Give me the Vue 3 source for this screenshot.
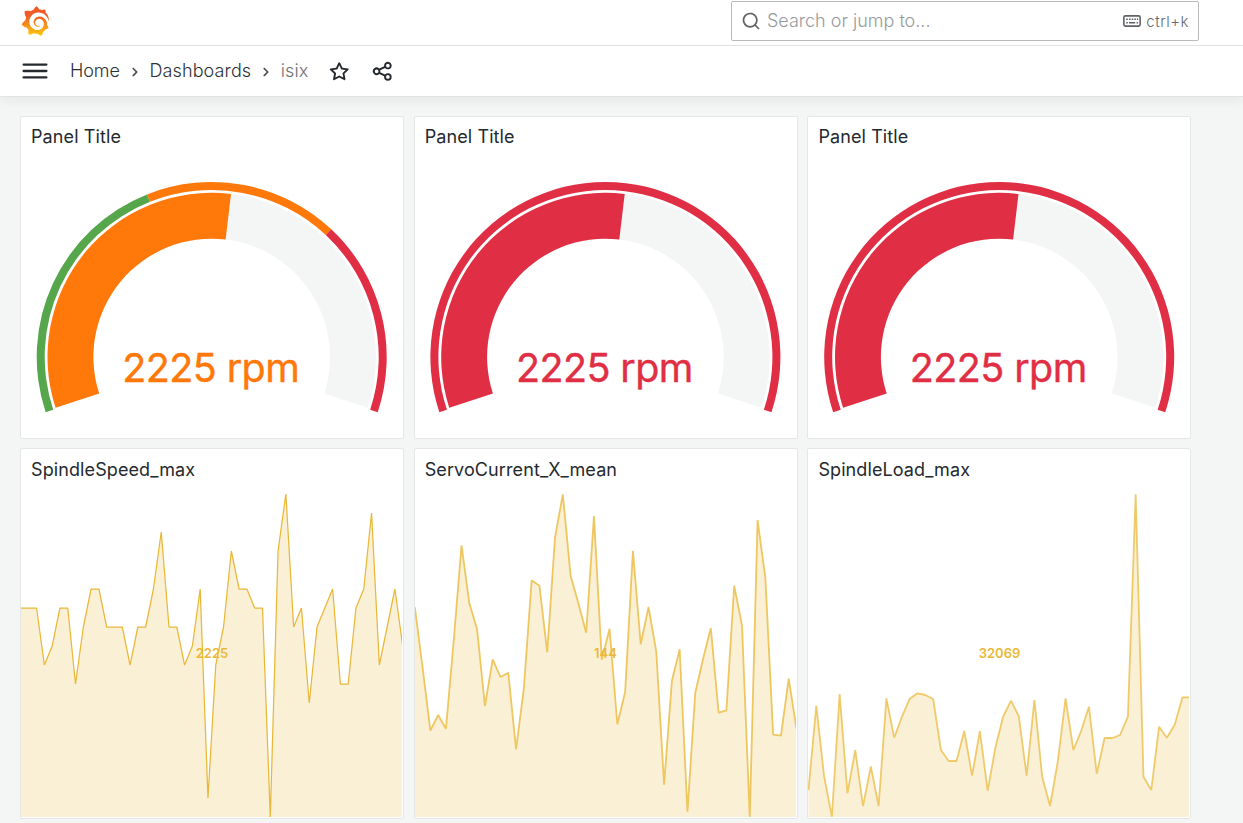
<script setup>
const step = 7.79

const polar = (cx, r, deg) => {
  const a = (deg * Math.PI) / 180
  return `${(cx + r * Math.sin(a)).toFixed(2)} ${(357 - r * Math.cos(a)).toFixed(2)}`
}

const arc = (cx, outer, inner, from, to) => {
  const large = to - from > 180 ? 1 : 0
  return `M${polar(cx, outer, from)}A${outer} ${outer} 0 ${large} 1 ${polar(cx, outer, to)}L${polar(cx, inner, to)}A${inner} ${inner} 0 ${large} 0 ${polar(cx, inner, from)}Z`
}

const red = '#e02f44'
const orange = '#ff780a'
const green = '#56a64b'

const gauges = [
  { left: 20, cx: 211.7, color: orange, bands: [[-108.4, -21.7, green], [-21.7, 43.1, orange], [43.1, 108.4, red]] },
  { left: 414, cx: 605.4, color: red, bands: [[-108.4, 108.4, red]] },
  { left: 807, cx: 999.2, color: red, bands: [[-108.4, 108.4, red]] }
]

const charts = [
  {
    title: 'SpindleSpeed_max', value: '2225', left: 20, x0: 21, right: 402, stroke: 1.25, opacity: 1, cx: 212,
    ys: [608, 608, 608, 665, 646, 608, 608, 684, 627, 589, 589, 627, 627, 627, 665, 627, 627, 589, 532, 627, 627, 665, 646, 589, 798, 665, 627, 551, 589, 589, 608, 608, 817, 551, 494, 627, 608, 703, 627, 608, 589, 684, 684, 608, 589, 513, 665, 627, 589, 646]
  },
  {
    title: 'ServoCurrent_X_mean', value: '144', left: 414, x0: 414.8, right: 796, stroke: 1.8, opacity: 0.78, cx: 605.5,
    ys: [607, 667.5, 730.7, 715, 728.7, 640, 545.3, 603.3, 629.3, 706, 659.3, 677, 672.7, 749.3, 688.3, 580.3, 585.7, 652.3, 537.3, 494.3, 575.7, 603.3, 632.7, 516, 659.7, 628.7, 724.3, 692, 550.7, 644.3, 607, 651.7, 784.7, 681, 649.3, 811.7, 693, 659, 628, 712.7, 710.3, 585.7, 625.3, 816.7, 520, 577.7, 734.7, 735.7, 678.7, 728.7]
  },
  {
    title: 'SpindleLoad_max', value: '32069', left: 807, x0: 808.5, right: 1189, stroke: 1.8, opacity: 0.72, cx: 999.5,
    ys: [790, 705.7, 776, 816.7, 694, 793.3, 750, 806, 766.3, 806, 698.3, 737.7, 716.7, 698.7, 693.3, 695, 699, 750, 761, 761, 731, 775.7, 731, 790.7, 747.3, 716.3, 700.7, 716.3, 775.7, 700, 776.7, 806, 761.7, 698.3, 750, 731, 706.7, 773.7, 738, 738, 735, 716.7, 494.3, 776.7, 790, 726.7, 737.7, 725, 697.3, 697.3]
  }
]

const line = (c) => c.ys.map((y, i) => `${(c.x0 + i * step).toFixed(2)},${y}`).join(' ')
const area = (c) => `${c.x0},817 ${line(c)} ${(c.x0 + (c.ys.length - 1) * step).toFixed(2)},817`
</script>

<template>
  <div class="page">
    <header class="topbar">
      <svg class="logo" viewBox="0 0 351 365">
        <defs>
          <linearGradient id="sun" gradientUnits="userSpaceOnUse" x1="175" y1="446" x2="175" y2="114">
            <stop offset="0" stop-color="#fff100" />
            <stop offset="1" stop-color="#f05a28" />
          </linearGradient>
        </defs>
        <path fill="url(#sun)" d="M342,161.2c-0.6-6.1-1.6-13.1-3.6-20.9c-2-7.7-5-16.2-9.4-25c-4.4-8.8-10.1-17.9-17.5-26.8c-2.9-3.5-6.1-6.9-9.5-10.2c5.1-20.3-6.2-37.9-6.2-37.9c-19.5-1.2-31.9,6.1-36.5,9.4c-0.8-0.3-1.5-0.7-2.3-1c-3.3-1.3-6.7-2.6-10.3-3.7c-3.5-1.1-7.1-2.1-10.8-3c-3.7-0.9-7.4-1.6-11.2-2.2c-0.7-0.1-1.3-0.2-2-0.3c-8.5-27.2-32.9-38.6-32.9-38.6c-27.3,17.3-32.4,41.5-32.4,41.5s-0.1,0.5-0.3,1.4c-1.5,0.4-3,0.9-4.5,1.3c-2.1,0.6-4.2,1.4-6.2,2.2c-2.1,0.8-4.1,1.6-6.2,2.5c-4.1,1.8-8.2,3.8-12.2,6c-3.9,2.2-7.7,4.6-11.4,7.1c-0.5-0.2-1-0.4-1-0.4c-37.8-14.4-71.3,2.9-71.3,2.9c-3.1,40.2,15.1,65.5,18.7,70.1c-0.9,2.5-1.7,5-2.5,7.5c-2.8,9.1-4.9,18.4-6.2,28.1c-0.2,1.4-0.4,2.8-0.5,4.2C18.8,192.7,8.5,228,8.5,228c29.1,33.5,63.1,35.6,63.1,35.6c0,0,0.1-0.1,0.1-0.1c4.3,7.7,9.3,15,14.9,21.9c2.4,2.9,4.8,5.6,7.4,8.3c-10.6,30.4,1.5,55.6,1.5,55.6c32.4,1.2,53.7-14.2,58.2-17.7c3.2,1.1,6.5,2.1,9.8,2.9c10,2.6,20.2,4.1,30.4,4.5c2.5,0.1,5.1,0.2,7.6,0.1l1.2,0l0.8,0l1.6,0l1.6-0.1l0,0.1c15.3,21.8,42.1,24.9,42.1,24.9c19.1-20.1,20.2-40.1,20.2-44.4l0,0c0,0,0-0.1,0-0.3c0-0.4,0-0.6,0-0.6l0,0c0-0.3,0-0.6,0-0.9c4-2.8,7.8-5.8,11.4-9.1c7.6-6.9,14.3-14.8,19.9-23.3c0.5-0.8,1-1.6,1.5-2.4c21.6,1.2,36.9-13.4,36.9-13.4c-3.6-22.5-16.4-33.5-19.1-35.6l0,0c0,0-0.1-0.1-0.3-0.2c-0.2-0.1-0.2-0.2-0.2-0.2c-0.1-0.1-0.3-0.2-0.5-0.3c0.1-1.4,0.2-2.7,0.3-4.1c0.2-2.4,0.2-4.9,0.2-7.3l0-1.8l0-0.9l0-0.5c0-0.6,0-0.4,0-0.6l-0.1-1.5l-0.1-2c0-0.7-0.1-1.3-0.2-1.9c-0.1-0.6-0.1-1.3-0.2-1.9l-0.2-1.9l-0.3-1.9c-0.4-2.5-0.8-4.9-1.4-7.4c-2.3-9.7-6.1-18.9-11-27.2c-5-8.3-11.2-15.6-18.3-21.8c-7-6.2-14.9-11.2-23.1-14.9c-8.3-3.7-16.9-6.1-25.5-7.2c-4.3-0.6-8.6-0.8-12.9-0.7l-1.6,0l-0.4,0c-0.1,0-0.6,0-0.5,0l-0.7,0l-1.6,0.1c-0.6,0-1.2,0.1-1.7,0.1c-2.2,0.2-4.4,0.5-6.5,0.9c-8.6,1.6-16.7,4.7-23.8,9c-7.1,4.3-13.3,9.6-18.3,15.6c-5,6-8.9,12.7-11.6,19.6c-2.7,6.9-4.2,14.1-4.6,21c-0.1,1.7-0.1,3.5-0.1,5.2c0,0.4,0,0.9,0,1.3l0.1,1.4c0.1,0.8,0.1,1.7,0.2,2.5c0.3,3.5,1,6.9,1.9,10.1c1.9,6.5,4.9,12.4,8.6,17.4c3.7,5,8.2,9.1,12.9,12.4c4.7,3.2,9.8,5.5,14.8,7c5,1.5,10,2.1,14.7,2.1c0.6,0,1.2,0,1.7,0c0.3,0,0.6,0,0.9,0c0.3,0,0.6,0,0.9-0.1c0.5,0,1-0.1,1.5-0.1c0.1,0,0.3,0,0.4-0.1l0.5-0.1c0.3,0,0.6-0.1,0.9-0.1c0.6-0.1,1.1-0.2,1.7-0.3c0.6-0.1,1.1-0.2,1.6-0.4c1.1-0.2,2.1-0.6,3.1-0.9c2-0.7,4-1.5,5.7-2.4c1.8-0.9,3.4-2,5-3c0.4-0.3,0.9-0.6,1.3-1c1.6-1.3,1.9-3.7,0.6-5.3c-1.1-1.4-3.1-1.8-4.7-0.9c-0.4,0.2-0.8,0.4-1.2,0.6c-1.4,0.7-2.8,1.3-4.3,1.8c-1.5,0.5-3.1,0.9-4.7,1.2c-0.8,0.1-1.6,0.2-2.5,0.3c-0.4,0-0.8,0.1-1.3,0.1c-0.4,0-0.9,0-1.2,0c-0.4,0-0.8,0-1.2,0c-0.5,0-1,0-1.5-0.1l-0.3,0l-0.3,0c-0.2,0-0.5,0-0.7-0.1c-0.5-0.1-0.9-0.1-1.4-0.2c-3.7-0.5-7.4-1.6-10.9-3.2c-3.6-1.6-7-3.8-10.1-6.6c-3.1-2.8-5.8-6.1-7.9-9.9c-2.1-3.8-3.6-8-4.3-12.4c-0.3-2.2-0.5-4.5-0.4-6.7c0-0.6,0.1-1.2,0.1-1.8l0-0.3l0-0.5c0-0.3,0.1-0.6,0.1-0.9c0.1-1.2,0.3-2.4,0.5-3.6c1.7-9.6,6.5-19,13.9-26.1c1.9-1.8,3.9-3.4,6-4.9c2.1-1.5,4.4-2.8,6.8-3.9c2.4-1.1,4.8-2,7.4-2.7c2.5-0.7,5.1-1.1,7.8-1.4c1.3-0.1,2.6-0.2,4-0.2c0.4,0,0.6,0,0.9,0l1.1,0l0.7,0l0.4,0l1.1,0.1c2.9,0.2,5.7,0.6,8.5,1.3c5.6,1.2,11.1,3.3,16.2,6.1c10.2,5.7,18.9,14.5,24.2,25.1c2.7,5.3,4.6,11,5.5,16.9c0.2,1.5,0.4,3,0.5,4.5l0.1,1.1l0.1,1.1c0,0.4,0,0.8,0,1.1c0,0.4,0,0.8,0,1.1l0,1l0,1.1c0,0.7-0.1,1.9-0.1,2.6c-0.1,1.6-0.3,3.3-0.5,4.9c-0.2,1.6-0.5,3.2-0.8,4.8c-0.3,1.6-0.7,3.2-1.1,4.7c-0.8,3.1-1.8,6.2-3,9.3c-2.4,6-5.6,11.8-9.4,17.1c-7.7,10.6-18.2,19.2-30.2,24.7c-6,2.7-12.3,4.7-18.8,5.7c-3.2,0.6-6.5,0.9-9.8,1l-0.6,0l-0.5,0l-1.1,0l-1.6,0l-1.2,0c-1.8,0-3.5-0.1-5.3-0.3c-7-0.5-13.9-1.8-20.7-3.7c-6.7-1.9-13.2-4.6-19.4-7.8c-12.3-6.6-23.4-15.6-32-26.5c-4.3-5.4-8.1-11.3-11.2-17.4c-3.1-6.1-5.6-12.6-7.4-19.1c-1.8-6.6-2.9-13.3-3.4-20.1l-0.1-1.3l0-7.2c0.1-3.3,0.4-6.8,0.8-10.2c0.4-3.4,1-6.9,1.7-10.3c0.7-3.4,1.5-6.8,2.5-10.2c1.9-6.7,4.3-13.2,7.1-19.3c5.7-12.2,13.1-23.1,22-31.8c2.2-2.2,4.5-4.2,6.9-6.2c2.4-1.9,4.9-3.7,7.5-5.4c2.5-1.7,5.2-3.2,7.9-4.6c1.3-0.7,2.7-1.4,4.1-2c1.4-0.6,2.8-1.2,4.2-1.8c2.8-1.2,5.7-2.2,8.7-3.1c1.5-0.4,2.9-0.9,4.4-1.3c1.5-0.4,3-0.8,4.5-1.1c1.5-0.4,3-0.7,4.6-1c1.5-0.3,3-0.5,4.6-0.8c3.8-0.6,7-0.9,10.4-1.2l7.4-0.4c2.9-0.1,5.9-0.1,8.8,0c5.8,0.2,11.5,0.9,17,1.9c11.1,2.1,21.5,5.6,31,10.3c9.5,4.6,17.9,10.3,25.3,16.5c0.9,0.8,1.8,1.6,2.7,2.4c0.9,0.8,1.7,1.6,2.6,2.4c0.9,0.8,1.7,1.6,2.5,2.4c0.8,0.8,1.6,1.6,2.4,2.5c3.1,3.3,6,6.6,8.6,10c5.2,6.7,9.4,13.5,12.7,19.9c0.4,0.8,0.8,1.6,1.2,2.4c0.4,0.8,0.8,1.6,1.1,2.4c0.4,0.8,0.7,1.5,1.1,2.3c0.3,0.8,0.7,1.5,1,2.3c1.2,3,2.4,5.9,3.3,8.6c1.5,4.4,2.6,8.3,3.5,11.7c0.3,1.4,1.6,2.3,3,2.1c1.5-0.1,2.6-1.3,2.6-2.8C342.6,170.4,342.5,166.1,342,161.2z" />
      </svg>
      <div class="search">
        <svg class="search-icon" viewBox="0 0 24 24"><path d="M21.71,20.29,18,16.61A9,9,0,1,0,16.61,18l3.68,3.68a1,1,0,0,0,1.42,0A1,1,0,0,0,21.71,20.29ZM11,18a7,7,0,1,1,7-7A7,7,0,0,1,11,18Z" /></svg>
        <span class="placeholder">Search or jump to...</span>
        <svg class="keyboard" viewBox="0 0 18 12">
          <rect x=".85" y=".85" width="16.3" height="10.3" rx="1.6" />
          <path d="M3.2 4.3h1.6M6 4.3h1.6M8.7 4.3h1.6M11.3 4.3h1.6M13.9 4.3h1.2M3.2 7.7h1.6M6 7.7h6.2M13.6 7.7h1.5" />
        </svg>
        <span class="shortcut">ctrl+k</span>
      </div>
    </header>

    <nav class="crumbs">
      <svg class="menu" viewBox="0 0 26 18"><path d="M1.6 2.6h22.8M1.6 9h22.8M1.6 15.4h22.8" /></svg>
      <span class="crumb home">Home</span>
      <svg class="chevron" viewBox="0 0 24 24"><path d="M14.83,11.29,10.59,7.05a1,1,0,0,0-1.42,0,1,1,0,0,0,0,1.41L12.71,12,9.17,15.54a1,1,0,0,0,0,1.41,1,1,0,0,0,.71.29,1,1,0,0,0,.71-.29l4.24-4.24A1,1,0,0,0,14.83,11.29Z" /></svg>
      <span class="crumb dashboards">Dashboards</span>
      <svg class="chevron" viewBox="0 0 24 24"><path d="M14.83,11.29,10.59,7.05a1,1,0,0,0-1.42,0,1,1,0,0,0,0,1.41L12.71,12,9.17,15.54a1,1,0,0,0,0,1.41,1,1,0,0,0,.71.29,1,1,0,0,0,.71-.29l4.24-4.24A1,1,0,0,0,14.83,11.29Z" /></svg>
      <span class="crumb current">isix</span>
      <svg class="action star" viewBox="0 0 24 24"><path d="M22,9.67A1,1,0,0,0,21.14,9l-5.69-.83L12.9,3a1,1,0,0,0-1.8,0L8.55,8.16,2.86,9a1,1,0,0,0-.81.68,1,1,0,0,0,.25,1l4.13,4-1,5.68A1,1,0,0,0,6.9,21.44L12,18.77l5.1,2.67a.93.93,0,0,0,.46.12,1,1,0,0,0,.59-.19,1,1,0,0,0,.4-1l-1-5.68,4.13-4A1,1,0,0,0,22,9.67Zm-6.15,4a1,1,0,0,0-.29.88l.72,4.2-3.76-2a1.06,1.06,0,0,0-.94,0l-3.76,2,.72-4.2a1,1,0,0,0-.29-.88l-3-3,4.21-.61a1,1,0,0,0,.76-.55L12,5.7l1.88,3.82a1,1,0,0,0,.76.55l4.21.61Z" /></svg>
      <svg class="action share" viewBox="0 0 24 24"><path d="M18,14a4,4,0,0,0-3.08,1.48l-5.1-2.35a3.64,3.64,0,0,0,0-2.26l5.1-2.35A4,4,0,1,0,14,6a4.17,4.17,0,0,0,.07.71L8.79,9.14a4,4,0,1,0,0,5.72l5.28,2.43A4.17,4.17,0,0,0,14,18a4,4,0,1,0,4-4ZM18,4a2,2,0,1,1-2,2A2,2,0,0,1,18,4ZM6,14a2,2,0,1,1,2-2A2,2,0,0,1,6,14Zm12,6a2,2,0,1,1,2-2A2,2,0,0,1,18,20Z" /></svg>
    </nav>

    <main class="grid">
      <section v-for="g in gauges" :key="g.left" class="panel">
        <h2 class="title">Panel Title</h2>
        <svg class="plot" :viewBox="`${g.left + 1} 157 382 281`">
          <path :d="arc(g.cx, 164.2, 118.3, -108, 108)" fill="#f4f5f5" />
          <path :d="arc(g.cx, 164.2, 118.3, -108, 6.75)" :fill="g.color" />
          <path v-for="b in g.bands" :key="b[0]" :d="arc(g.cx, 175, 167, b[0], b[1])" :fill="b[2]" />
          <text class="reading" :x="g.cx - 0.7" y="381.6" :fill="g.color" :stroke="g.color" textLength="177.5">2225 rpm</text>
        </svg>
      </section>

      <section v-for="c in charts" :key="c.title" class="panel lower">
        <h2 class="title">{{ c.title }}</h2>
        <svg class="plot" :viewBox="`${c.left + 1} 490 382 328`">
          <clipPath :id="`clip-${c.value}`"><rect :x="c.left" y="490" :width="c.right - c.left" height="327" /></clipPath>
          <g :clip-path="`url(#clip-${c.value})`">
            <polygon :points="area(c)" fill="#faf0d6" />
            <polyline :points="line(c)" class="series" :stroke-width="c.stroke" :stroke-opacity="c.opacity" />
          </g>
          <text class="stat" :x="c.cx" y="658">{{ c.value }}</text>
        </svg>
      </section>
    </main>
  </div>
</template>

<style>
body {
  background: #f4f5f5;
  overflow: hidden;
}
</style>

<style scoped>
.page {
  box-sizing: border-box;
  width: 1243px;
  height: 823px;
  overflow: hidden;
  background: #f4f5f5;
  color: #24292e;
  font-family: Inter, "Liberation Sans", sans-serif;
}
.topbar {
  box-sizing: border-box;
  display: flex;
  height: 46px;
  padding-left: 21px;
  background: #fff;
  border-bottom: 1px solid #e2e3e3;
}
.logo {
  width: 28.6px;
  height: 30px;
  margin-top: 6px;
}
.search {
  box-sizing: border-box;
  display: flex;
  align-items: center;
  width: 468px;
  height: 40px;
  margin: 1px 44px 0 auto;
  padding: 0 9px;
  border: 1px solid #b9babb;
  border-radius: 2px;
}
.search-icon {
  width: 20px;
  height: 20px;
  margin-right: 6px;
  fill: #5f6368;
}
.placeholder {
  color: #979a9c;
  font-size: 18px;
  font-weight: 300;
  letter-spacing: 0;
  line-height: 38px;
}
.keyboard {
  width: 18px;
  height: 12px;
  margin: 0 5px 0 auto;
  fill: none;
  stroke: #5f6266;
  stroke-width: 1.6;
}
.shortcut {
  color: #66696d;
  font-size: 15px;
  font-weight: 300;
  letter-spacing: 0.5px;
}
.crumbs {
  position: relative;
  box-sizing: border-box;
  display: flex;
  align-items: center;
  height: 51px;
  padding-left: 22px;
  background: #fff;
  border-bottom: 1px solid #e2e3e3;
  box-shadow: 0 5px 10px rgba(24, 26, 27, 0.05);
}
.menu {
  width: 26px;
  height: 18px;
  fill: none;
  stroke: #24292e;
  stroke-width: 2.3;
  stroke-linecap: round;
}
.crumb {
  color: #2c3135;
  font-size: 18px;
  font-weight: 300;
  letter-spacing: 0.13px;
  line-height: 22px;
  padding-bottom: 1px;
  white-space: nowrap;
}
.home {
  width: 50px;
  margin-left: 22px;
  letter-spacing: -0.1px;
}
.dashboards {
  width: 102px;
}
.current {
  width: 28px;
  color: #6e7174;
}
.chevron {
  width: 20px;
  height: 20px;
  margin: 2px 4.4px 0 5px;
  fill: #4a4e52;
}
.action {
  width: 22.5px;
  height: 22.5px;
  fill: #24292e;
}
.star {
  margin-left: 19.2px;
}
.share {
  margin-left: 20.5px;
}
.grid {
  display: grid;
  grid-template-columns: repeat(3, 384px);
  grid-template-rows: 323px 371px;
  gap: 9px 9.7px;
  padding: 19px 0 0 20px;
}
.panel {
  box-sizing: border-box;
  display: flex;
  flex-direction: column;
  background: #fff;
  border: 1px solid #e4e6e7;
  border-radius: 2px;
}
.title {
  height: 40px;
  margin: 0;
  padding-left: 10px;
  font-size: 18px;
  font-weight: 400;
  letter-spacing: 0.1px;
  line-height: 40px;
  flex: none;
}
.lower .title {
  height: 41px;
  line-height: 42px;
}
.plot {
  display: block;
  width: 382px;
  flex: 1;
  min-height: 0;
}
.reading {
  font-size: 39.5px;
  font-weight: 400;
  stroke-width: 0.4;
  text-anchor: middle;
}
.series {
  fill: none;
  stroke: #eab839;
  stroke-linejoin: bevel;
}
.stat {
  fill: #eab839;
  font-size: 13px;
  font-weight: 600;
  text-anchor: middle;
}
</style>
